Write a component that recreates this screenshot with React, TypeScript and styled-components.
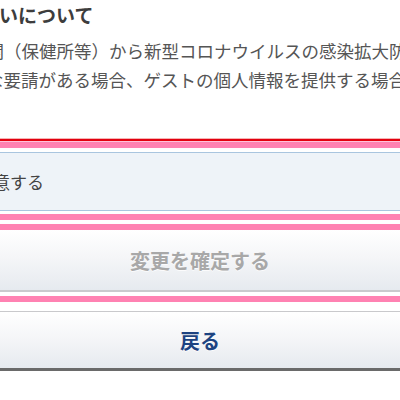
import React from 'react'
import styled, { createGlobalStyle } from 'styled-components'

const GlobalStyle = createGlobalStyle`
  html, body {
    margin: 0;
    padding: 0;
    background: #fff;
    overflow: hidden;
  }
  body {
    font-family: "Noto Sans CJK JP", "Noto Sans", sans-serif;
  }
`

const Page = styled.div`
  width: 400px;
  display: flex;
  flex-direction: column;
`

const Notice = styled.section`
  margin-left: -136px;
  display: flex;
  flex-direction: column;
  gap: 6px;
  white-space: nowrap;
`

const Title = styled.h2`
  margin: 0;
  padding-left: 2px;
  font-size: 19px;
  line-height: 30px;
  font-weight: 700;
  color: #3d3d3d;
`

const Body = styled.p`
  margin: 0;
  font-size: 17.5px;
  line-height: 29px;
  color: #555;
`

const Form = styled.div`
  margin-top: 44px;
  display: flex;
  flex-direction: column;
`

const Rule = styled.div<{ $color: string; $h: number; $gap?: number }>`
  height: ${(p) => p.$h}px;
  background: ${(p) => p.$color};
  margin-top: ${(p) => p.$gap ?? 0}px;
`

const AgreeBox = styled.label`
  margin-top: 4px;
  height: 57px;
  display: flex;
  align-items: center;
  background: #eef3f8;
  border-top: 1px solid #a9c5df;
  border-bottom: 1px solid #a9c5df;
  font-size: 17px;
  color: #444;
`

const AgreeInner = styled.span`
  margin-left: -48px;
  display: flex;
  align-items: center;
  gap: 6px;
`

const Check = styled.span`
  width: 18px;
  height: 18px;
  border: 1px solid #999;
  border-radius: 3px;
  background: #fff;
  box-sizing: border-box;
`

const ActionButton = styled.button<{ $tone: 'disabled' | 'back'; $gap?: number }>`
  margin-top: ${(p) => p.$gap ?? 0}px;
  width: 100%;
  border: 0;
  border-top: ${(p) => (p.$tone === 'back' ? '1px solid #c9c9cc' : '0')};
  border-bottom: ${(p) => (p.$tone === 'back' ? '3px solid #6a6a6a' : '2px solid #c9cacd')};
  height: ${(p) => (p.$tone === 'back' ? 60 : 62)}px;
  background: linear-gradient(#ffffff 0%, #f5f6f8 45%, #e6eaef 100%);
  font-family: "Noto Sans CJK JP", "Noto Sans", sans-serif;
  font-size: 20px;
  font-weight: 700;
  color: ${(p) => (p.$tone === 'back' ? '#1d4381' : '#a8a8a8')};
  text-shadow: 0 1px 0 rgba(255, 255, 255, 0.8);
  padding: 0;
  cursor: pointer;
`

const PINK = '#ff82b2'

const App = () => {
  return (
    <Page>
      <GlobalStyle />
      <Notice>
        <Title>個人情報の取扱いについて</Title>
        <Body>
          当館は、行政機関（保健所等）から新型コロナウイルスの感染拡大防止
          <br />
          に関しての正式な要請がある場合、ゲストの個人情報を提供する場合があります。
        </Body>
      </Notice>
      <Form>
        <Rule $color="#f5b3b3" $h={1} />
        <Rule $color="#e3000f" $h={2} />
        <Rule $color="#ffc3d9" $h={1} />
        <Rule $color={PINK} $h={6} />
        <AgreeBox>
          <AgreeInner>
            <Check />
            同意する
          </AgreeInner>
        </AgreeBox>
        <Rule $color={PINK} $h={6} $gap={3} />
        <Rule $color={PINK} $h={6} $gap={4} />
        <ActionButton $tone="disabled" disabled>
          変更を確定する
        </ActionButton>
        <Rule $color={PINK} $h={6} $gap={4} />
        <ActionButton $tone="back" $gap={9}>
          戻る
        </ActionButton>
      </Form>
    </Page>
  )
}

export default React.memo(App)
